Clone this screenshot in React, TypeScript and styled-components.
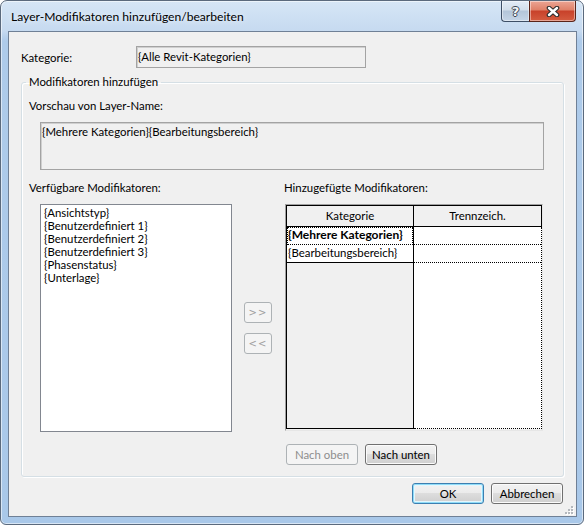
import styled, { createGlobalStyle, css } from "styled-components";

const GlobalStyle = createGlobalStyle`
  html, body {
    margin: 0;
    padding: 0;
    background: #fff;
  }
  body {
    font-family: "Segoe UI", Lato, "Liberation Sans", sans-serif;
    font-size: 11.4px;
    color: #000;
  }
`;

const availableModifiers = [
  "{Ansichtstyp}",
  "{Benutzerdefiniert 1}",
  "{Benutzerdefiniert 2}",
  "{Benutzerdefiniert 3}",
  "{Phasenstatus}",
  "{Unterlage}",
];

const addedModifiers = [
  { name: "{Mehrere Kategorien}", separator: "" },
  { name: "{Bearbeitungsbereich}", separator: "" },
];

const App = () => {
  return (
    <>
      <GlobalStyle />
      <Window>
        <TitleBar>
          <Title>Layer-Modifikatoren hinzufügen/bearbeiten</Title>
          <CaptionButtons>
            <HelpButton>?</HelpButton>
            <CloseButton>
              <svg width="14" height="11" viewBox="0 0 14 11">
                <path d="M3 2 L11 9 M11 2 L3 9" stroke="#2d2d2d" strokeWidth="4.6" strokeLinecap="round" />
                <path d="M3 2 L11 9 M11 2 L3 9" stroke="#fff" strokeWidth="2.4" strokeLinecap="round" />
              </svg>
            </CloseButton>
          </CaptionButtons>
        </TitleBar>

        <Client>
          <CategoryRow>
            <CategoryLabel>Kategorie:</CategoryLabel>
            <ReadOnlyField>{"{Alle Revit-Kategorien}"}</ReadOnlyField>
          </CategoryRow>

          <GroupBox>
            <Legend>Modifikatoren hinzufügen</Legend>
            <PreviewLabel>Vorschau von Layer-Name:</PreviewLabel>
            <PreviewField>{"{Mehrere Kategorien}{Bearbeitungsbereich}"}</PreviewField>

            <Columns>
              <LeftColumn>
                <Label>Verfügbare Modifikatoren:</Label>
                <ListBox>
                  {availableModifiers.map((m) => (
                    <ListItem key={m}>{m}</ListItem>
                  ))}
                </ListBox>
              </LeftColumn>

              <ArrowColumn>
                <ArrowButton disabled>&gt;&gt;</ArrowButton>
                <ArrowButton disabled>&lt;&lt;</ArrowButton>
              </ArrowColumn>

              <RightColumn>
                <Label>Hinzugefügte Modifikatoren:</Label>
                <GridFrame>
                  <GridHeader>
                    <HeadCell $first>Kategorie</HeadCell>
                    <HeadCell>Trennzeich.</HeadCell>
                  </GridHeader>
                  <GridBody>
                    <KeyColumn>
                      {addedModifiers.map((m, i) => (
                        <KeyCell key={m.name} $focused={i === 0} $last={i === addedModifiers.length - 1}>
                          {m.name}
                        </KeyCell>
                      ))}
                    </KeyColumn>
                    <ValueColumn>
                      {addedModifiers.map((m) => (
                        <ValueCell key={m.name}>{m.separator}</ValueCell>
                      ))}
                    </ValueColumn>
                  </GridBody>
                </GridFrame>
                <MoveButtons>
                  <Button disabled>Nach oben</Button>
                  <Button>Nach unten</Button>
                </MoveButtons>
              </RightColumn>
            </Columns>
          </GroupBox>

          <DialogButtons>
            <Button $default>OK</Button>
            <Button>Abbrechen</Button>
          </DialogButtons>

          <SizeGrip width="10" height="10" viewBox="0 0 10 10">
            {[
              [7, 1],
              [4, 4],
              [7, 4],
              [1, 7],
              [4, 7],
              [7, 7],
            ].map(([x, y]) => (
              <g key={`${x}-${y}`}>
                <rect x={x + 1} y={y + 1} width="2" height="2" fill="#fff" />
                <rect x={x} y={y} width="2" height="2" fill="#b4b8bd" />
              </g>
            ))}
          </SizeGrip>
        </Client>
      </Window>
    </>
  );
};

const Window = styled.div`
  width: 584px;
  height: 525px;
  box-sizing: border-box;
  border: 1px solid #5b6a7d;
  border-radius: 7px 7px 6px 6px;
  background: linear-gradient(to bottom, #d6e6f6 0px, #c6daf0 30px, #aecbea 40px, #a9c8e9 100%);
  box-shadow: inset 0 0 0 1px rgba(255, 255, 255, 0.55);
  display: flex;
  flex-direction: column;
  overflow: hidden;
`;

const TitleBar = styled.div`
  height: 30px;
  display: flex;
  align-items: flex-start;
  flex-shrink: 0;
`;

const Title = styled.div`
  padding: 8px 0 0 10px;
  line-height: 16px;
  font-size: 12.1px;
  text-shadow: 0 0 6px rgba(255, 255, 255, 0.9);
`;

const CaptionButtons = styled.div`
  margin-left: auto;
  margin-right: 7px;
  display: flex;
`;

const captionBase = css`
  box-sizing: border-box;
  height: 21px;
  display: flex;
  align-items: center;
  justify-content: center;
  border: 1px solid #3e4f66;
  border-top: none;
  box-shadow: inset 0 0 0 1px rgba(255, 255, 255, 0.45);
`;

const HelpButton = styled.div`
  ${captionBase};
  width: 28px;
  border-right: none;
  border-radius: 0 0 0 4px;
  background: linear-gradient(to bottom, #e3ecf6 0%, #d2deeb 45%, #b3c5d9 50%, #c5d5e7 100%);
  font-family: "DejaVu Sans", sans-serif;
  font-weight: bold;
  font-size: 13px;
  color: #f3f5f7;
  text-shadow: 1px 0 0 #3b4552, -1px 0 0 #3b4552, 0 1px 0 #3b4552, 0 -1px 0 #3b4552;
`;

const CloseButton = styled.div`
  ${captionBase};
  width: 47px;
  border-color: #5a2419;
  border-radius: 0 0 4px 0;
  background: linear-gradient(to bottom, #eca594 0%, #df8068 45%, #c8412a 50%, #d45c40 100%);
`;

const Client = styled.div`
  position: relative;
  flex: 1;
  margin: 0 6px 7px 7px;
  border: 1px solid #6f8096;
  background: #f0f0f0;
  padding: 14px 12px 10px 12px;
  display: flex;
  flex-direction: column;
`;

const CategoryRow = styled.div`
  display: flex;
  align-items: center;
  height: 22px;
`;

const CategoryLabel = styled.div`
  width: 115px;
`;

const sunkenField = css`
  box-sizing: border-box;
  background: #f0f0f0;
  border: 1px solid #a3a3a3;
  box-shadow: inset 1px 1px 0 #cfcfcf;
  white-space: nowrap;
`;

const ReadOnlyField = styled.div`
  ${sunkenField};
  width: 230px;
  height: 22px;
  padding: 3px 1px;
  line-height: 14px;
`;

const GroupBox = styled.fieldset`
  margin: 6px 0 0 0;
  padding: 0 0 11px 7px;
  border: 1px solid #d5dfe5;
  border-radius: 3px;
  box-shadow: inset 1px 1px 0 #fff, 1px 1px 0 #fff;
  min-width: 0;
`;

const Legend = styled.legend`
  margin-left: -3px;
  padding: 0 3px;
  line-height: 16px;
`;

const Label = styled.div`
  line-height: 15px;
  white-space: nowrap;
`;

const PreviewLabel = styled(Label)`
  margin-top: 8px;
`;

const PreviewField = styled.div`
  ${sunkenField};
  margin: 9px 0 0 11px;
  width: 504px;
  height: 48px;
  padding: 2px 1px;
  line-height: 14px;
`;

const Columns = styled.div`
  margin-top: 10px;
  display: flex;
  align-items: flex-start;
`;

const LeftColumn = styled.div`
  width: 203px;
  display: flex;
  flex-direction: column;
`;

const ListBox = styled.div`
  box-sizing: border-box;
  margin: 9px 0 0 11px;
  width: 192px;
  height: 228px;
  background: #fff;
  border: 1px solid #828790;
  padding: 1px 3px;
`;

const ListItem = styled.div`
  line-height: 13px;
  white-space: nowrap;
`;

const ArrowColumn = styled.div`
  margin-left: 12px;
  width: 28px;
  padding-top: 122px;
  display: flex;
  flex-direction: column;
  gap: 10px;
`;

const buttonFace = css`
  box-sizing: border-box;
  height: 21px;
  padding: 0;
  font: inherit;
  color: #000;
  border: 1px solid #707070;
  border-radius: 3px;
  background: linear-gradient(to bottom, #f2f2f2 0%, #ebebeb 49%, #dddddd 50%, #cfcfcf 100%);
  box-shadow: inset 0 0 0 1px #fbfbfb;
  &:disabled {
    color: #8d8d8d;
    border-color: #adb2b5;
    background: #f4f4f4;
    box-shadow: none;
  }
`;

const ArrowButton = styled.button`
  ${buttonFace};
  width: 28px;
  letter-spacing: 1px;
  font-family: "DejaVu Sans", sans-serif;
  font-size: 10px;
  &:disabled {
    color: #a0a0a0;
  }
`;

const Button = styled.button<{ $default?: boolean }>`
  ${buttonFace};
  width: 72px;
  line-height: 19px;
  ${(p) =>
    p.$default &&
    css`
      border-color: #3c7fb1;
      box-shadow: inset 0 0 0 1px #8fdcf8, inset 0 0 0 2px #e4f6fd;
    `}
`;

const RightColumn = styled.div`
  margin-left: 12px;
  display: flex;
  flex-direction: column;
`;

const GridFrame = styled.div`
  box-sizing: border-box;
  margin: 9px 0 0 1px;
  width: 258px;
  height: 227px;
  border: 1px solid;
  border-color: #a0a0a0 #e6e6e6 #e6e6e6 #a0a0a0;
  padding-bottom: 1px;
  display: flex;
  flex-direction: column;
  background: #f0f0f0;
`;

const GridHeader = styled.div`
  box-sizing: border-box;
  height: 22px;
  display: flex;
  border: 1px solid #000;
  background: #f0f0f0;
  flex-shrink: 0;
`;

const HeadCell = styled.div<{ $first?: boolean }>`
  box-sizing: border-box;
  line-height: 20px;
  text-align: center;
  ${(p) =>
    p.$first
      ? css`
          width: 127px;
          border-right: 1px solid #000;
        `
      : css`
          flex: 1;
        `}
`;

const GridBody = styled.div`
  flex: 1;
  display: flex;
`;

const KeyColumn = styled.div`
  box-sizing: border-box;
  width: 128px;
  border: 1px solid #000;
  border-top: none;
  background: #f0f0f0;
`;

const KeyCell = styled.div<{ $focused?: boolean; $last?: boolean }>`
  box-sizing: border-box;
  height: 18px;
  line-height: 16px;
  padding: 0 1px;
  background: #fff;
  white-space: nowrap;
  overflow: hidden;
  border-bottom: 1px dotted #000;
  ${(p) =>
    p.$focused &&
    css`
      font-weight: bold;
      font-size: 12px;
      outline: 1px dotted #000;
      outline-offset: -1px;
    `}
  ${(p) =>
    p.$last &&
    css`
      border-bottom: 1px solid #000;
    `}
`;

const ValueColumn = styled.div`
  box-sizing: border-box;
  flex: 1;
  background: #fff;
  border-right: 1px dotted #000;
  border-bottom: 1px dotted #000;
`;

const ValueCell = styled.div`
  box-sizing: border-box;
  height: 18px;
  border-bottom: 1px dotted #000;
`;

const MoveButtons = styled.div`
  margin: 13px 0 0 2px;
  display: flex;
  gap: 7px;
`;

const DialogButtons = styled.div`
  margin-top: 6px;
  margin-right: 1px;
  display: flex;
  justify-content: flex-end;
  gap: 7px;
`;

const SizeGrip = styled.svg`
  position: absolute;
  right: 2px;
  bottom: 1px;
`;

export default App;
